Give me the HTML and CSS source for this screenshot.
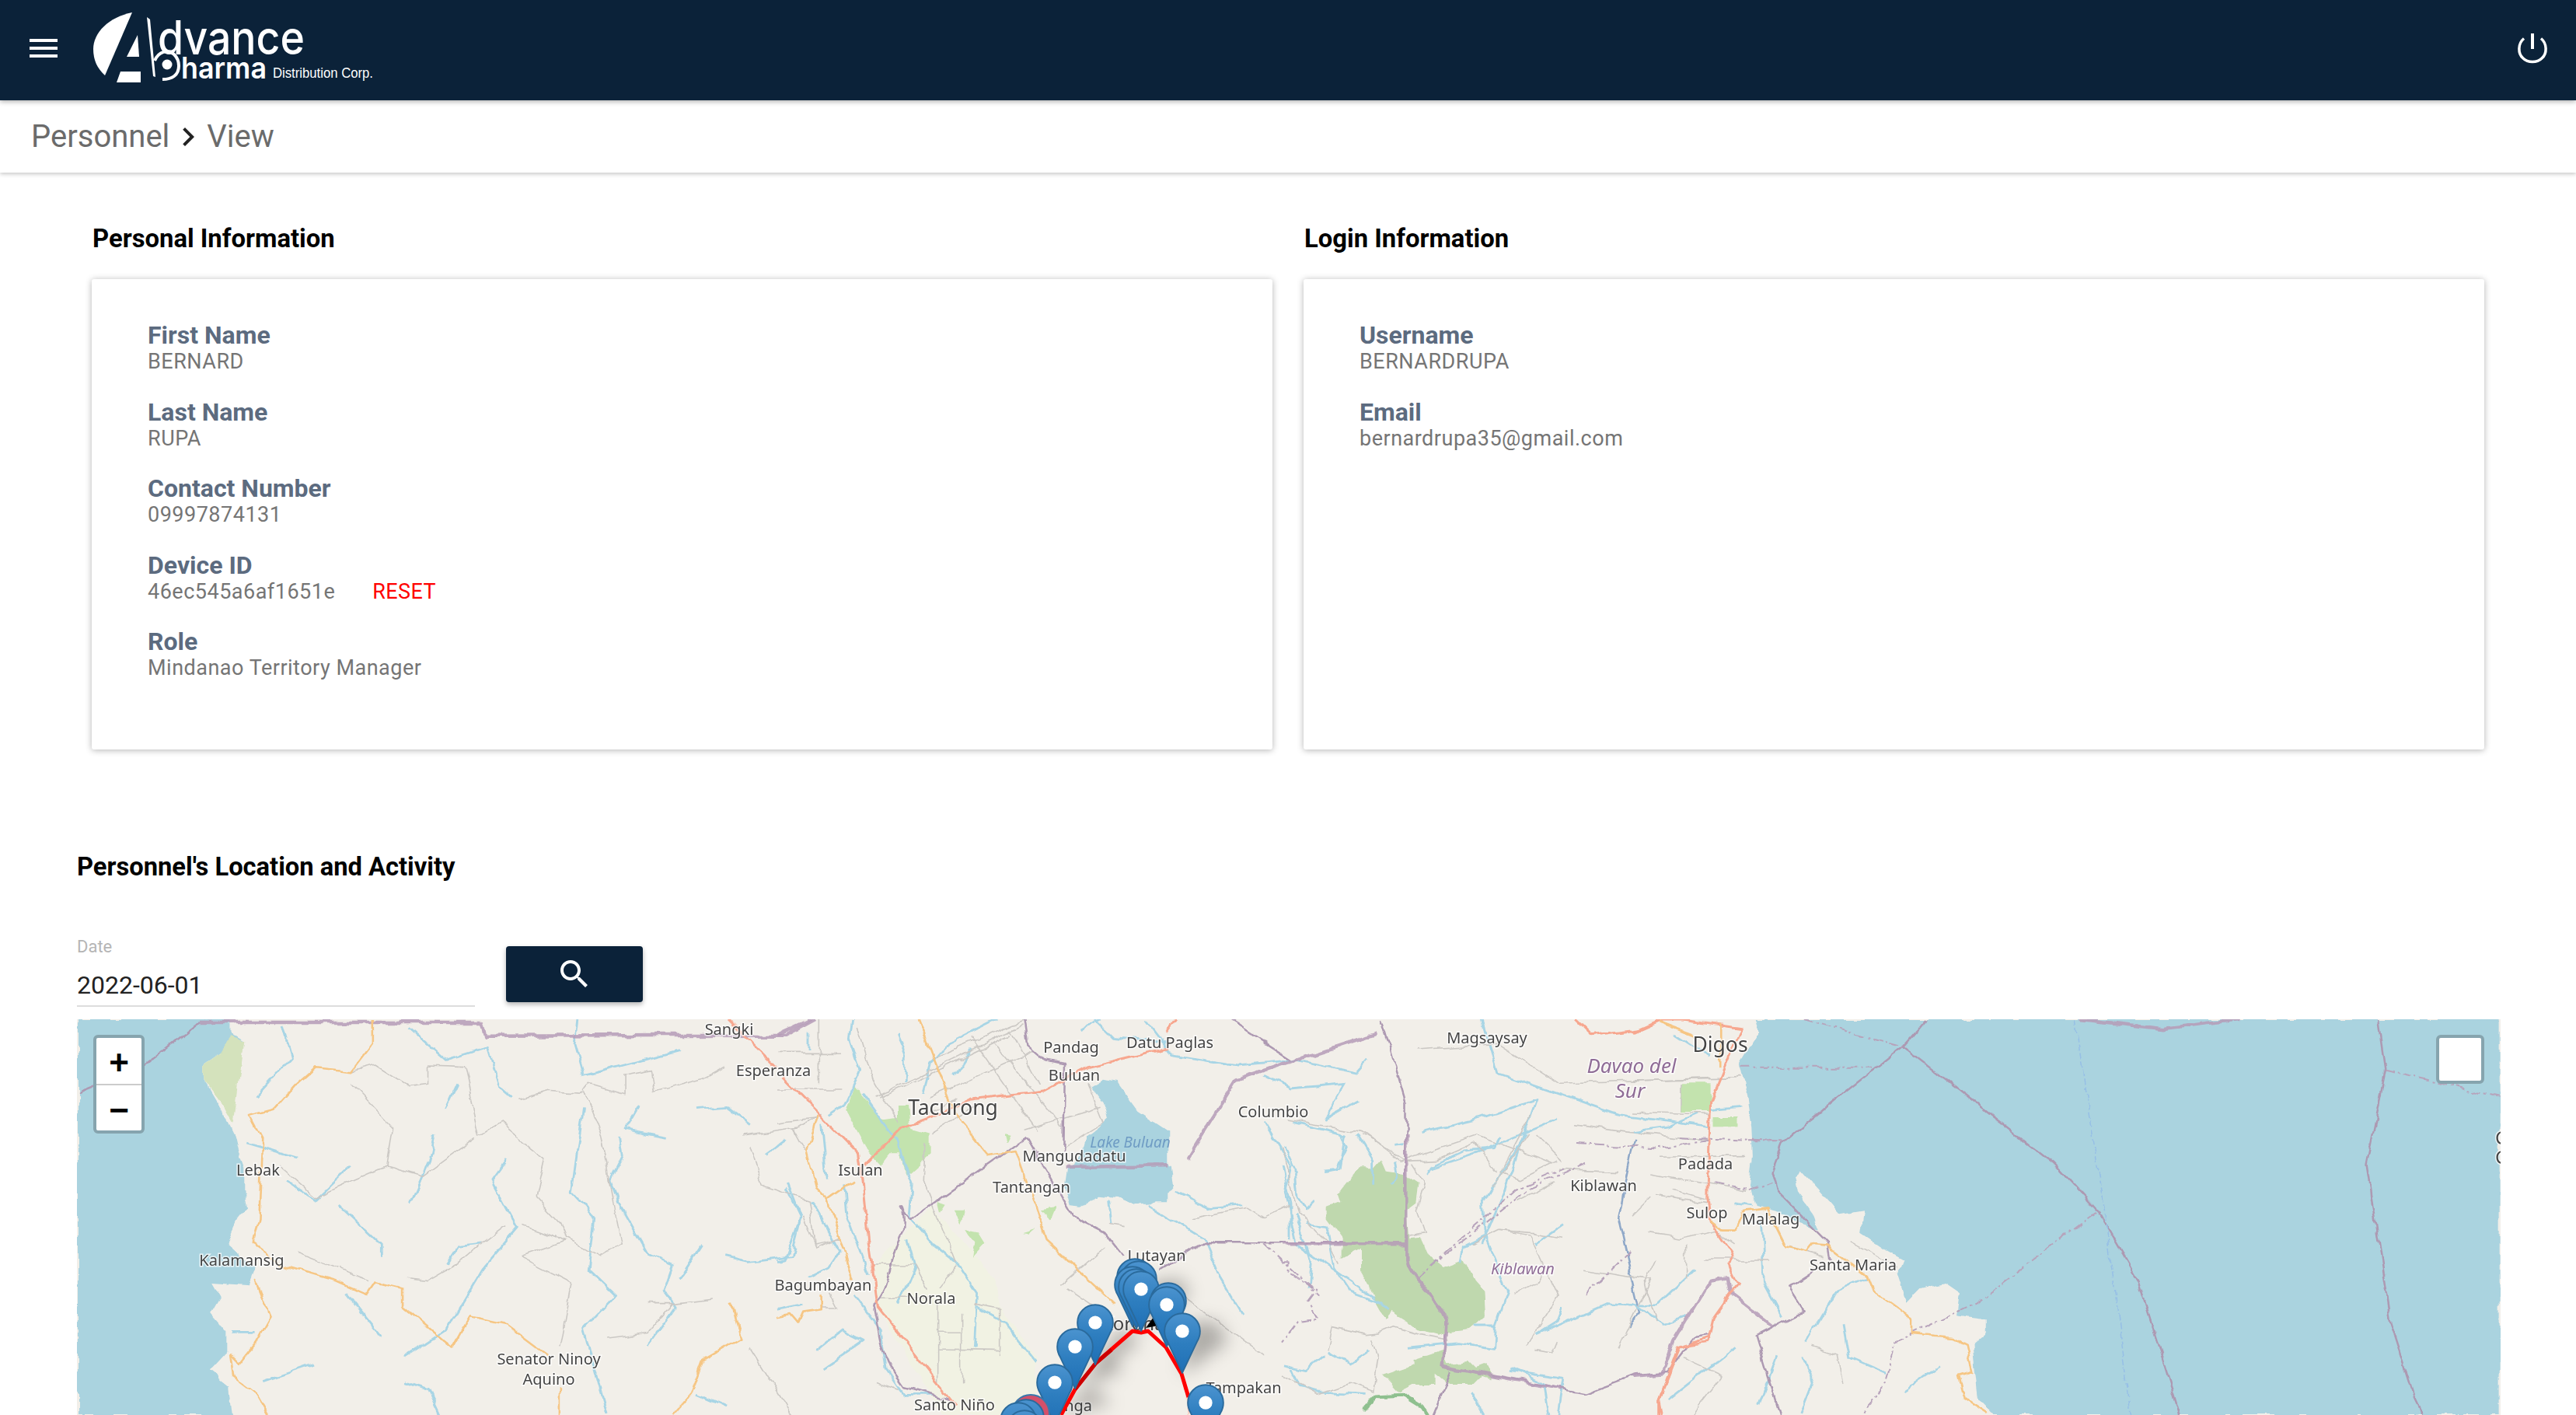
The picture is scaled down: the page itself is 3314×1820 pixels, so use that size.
FILE: index.html
```html
<!DOCTYPE html>
<html lang="en">
<head>
<meta charset="utf-8">
<title>Personnel View</title>
<link rel="stylesheet" href="styles.css">
</head>
<body>
<header class="topbar">
  <button class="icon-btn menu-btn" aria-label="Menu"><span></span><span></span><span></span></button>
  <svg class="logo" width="500" height="129" viewBox="0 0 500 129">
    <path class="logo-fill" d="M170 16C140 22 120 42 120 63C120 77 125 88 135 97Z"/>
    <path class="logo-fill" d="M177 45L179 73L163 73Z"/>
    <path class="logo-fill" d="M155 92L181 92L181 106L150 106Z"/>
    <path class="logo-fill" d="M189 22L193 25L200 99L197 98Z"/>
    <path class="logo-line" d="M199 78C204 66 216 63 224 70C232 78 232 92 224 98C220 101 214 102 209 102"/>
    <circle class="logo-fill" cx="215" cy="83" r="6.500"/>
    <text class="logo-big" x="203" y="70" textLength="189" lengthAdjust="spacingAndGlyphs">dvance</text>
    <text class="logo-mid" x="233" y="101" textLength="110" lengthAdjust="spacingAndGlyphs">harma</text>
    <text class="logo-small" x="351" y="100" textLength="129" lengthAdjust="spacingAndGlyphs">Distribution Corp.</text>
  </svg>
  <button class="icon-btn power-btn" aria-label="Log out">
    <svg width="40" height="40" viewBox="0 0 40 40"><path class="power-line" d="M9 7.500C1 14 1 27 8 33C14 39 26 39 32 33C39 27 39 14 31 7.500"/><rect class="power-bar" x="18" y="1" width="4" height="20"/></svg>
  </button>
</header>

<nav class="crumbs">
  <span>Personnel</span>
  <svg class="chevron" width="48" height="48" viewBox="0 0 24 24"><path d="M10 6L8.590 7.410 13.170 12l-4.580 4.590L10 18l6-6z"/></svg>
  <span>View</span>
</nav>

<main>
  <section class="info-grid">
    <div>
      <h2 class="info-title">Personal Information</h2>
      <div class="card">
        <div class="field"><div class="field-label">First Name</div><div class="field-value">BERNARD</div></div>
        <div class="field"><div class="field-label">Last Name</div><div class="field-value">RUPA</div></div>
        <div class="field"><div class="field-label">Contact Number</div><div class="field-value">09997874131</div></div>
        <div class="field"><div class="field-label">Device ID</div><div class="field-value device">46ec545a6af1651e<span class="reset">RESET</span></div></div>
        <div class="field"><div class="field-label">Role</div><div class="field-value">Mindanao Territory Manager</div></div>
      </div>
    </div>
    <div>
      <h2 class="info-title">Login Information</h2>
      <div class="card">
        <div class="field"><div class="field-label">Username</div><div class="field-value">BERNARDRUPA</div></div>
        <div class="field"><div class="field-label">Email</div><div class="field-value">bernardrupa35@gmail.com</div></div>
      </div>
    </div>
  </section>

  <section class="activity">
    <h2 class="activity-title">Personnel's Location and Activity</h2>
    <div class="filter">
      <div class="date-field">
        <div class="date-label">Date</div>
        <div class="date-value">2022-06-01</div>
      </div>
      <button class="search-btn" aria-label="Search">
        <svg width="48" height="48" viewBox="0 0 24 24"><path d="M15.500 14h-.79l-.28-.27C15.410 12.590 16 11.110 16 9.500 16 5.910 13.090 3 9.500 3S3 5.910 3 9.500 5.910 16 9.500 16c1.610 0 3.090-.59 4.230-1.570l.27.28v.79l5 4.990L20.490 19l-4.990-5zm-6 0C7.010 14 5 11.990 5 9.500S7.010 5 9.500 5 14 7.010 14 9.500 11.990 14 9.500 14z"/></svg>
      </button>
    </div>

    <div class="map">
      <svg class="map-svg" width="3118" height="509" viewBox="99 1311 3118 509">
        <defs>
          <linearGradient id="pinfill" x1="0" y1="0" x2="0" y2="1">
            <stop offset="0" stop-color="#4b93cf"/>
            <stop offset="0.500" stop-color="#2e7ebf"/>
            <stop offset="1" stop-color="#1f6fb5"/>
          </linearGradient>
          <filter id="wiggle" filterUnits="userSpaceOnUse" x="60" y="1280" width="3200" height="580">
            <feTurbulence type="fractalNoise" baseFrequency="0.035" numOctaves="3" seed="7" result="noise"/>
            <feDisplacementMap in="SourceGraphic" in2="noise" scale="11" xChannelSelector="R" yChannelSelector="G"/>
            <feGaussianBlur stdDeviation="0.7"/>
          </filter>
          <symbol id="pin" width="48" height="79" viewBox="0 0 25 41">
            <path class="pin-body" d="M12.500 .6C5.900 .6 .6 5.900 .6 12.500C.6 15 1.400 17.500 2.600 19.500L12.500 40.400L22.400 19.500C23.600 17.500 24.400 15 24.400 12.500C24.400 5.900 19.100 .6 12.500 .6Z"/>
            <circle class="pin-dot" cx="12.500" cy="12.500" r="4.500"/>
          </symbol>
        </defs>

        <rect class="land" x="99" y="1311" width="3118" height="509"/>

        <g class="soft">
          <g transform="translate(1100,1300) scale(.7015,.3333)">
            <path class="water" d="M500 500L580 600L585 690L545 745L510 750L480 720Z"/>
          </g>
          <g transform="translate(100,1300) scale(.7653,.3333)">
            <path class="water" d="M0 33L258 33L258 90L280 120L240 165L212 210L212 270L225 320L250 420L265 490L270 540L280 600L280 700L285 760L270 800L250 900L300 1000L290 1060L225 1050L240 1110L225 1170L250 1240L250 1320L222 1390L255 1450L260 1560L0 1560Z"/>
            <path class="green-pale" d="M258 100L280 120L262 440L240 350L212 270L212 210L240 165Z"/>
          </g>
          <g transform="translate(2100,1300) scale(.7742,.3333)">
            <path class="water" d="M205 33L212 80L178 210L190 330L198 450L200 560L195 680L205 750L240 770L270 810L310 840L300 780L275 700L270 640L280 620L310 700L345 790L385 775L380 860L415 915L450 960L440 1020L455 1130L480 1070L520 1050L545 1090L540 1180L590 1195L590 1240L565 1290L570 1400L575 1500L600 1560L1441 1560L1441 33Z"/>
            <path class="green-light" d="M80 280L130 280L130 390L80 390Z"/>
            <path class="green-light" d="M135 405L175 405L175 445L135 445Z"/>
          </g>

          <g transform="translate(100,1300) scale(.7653,.3333)">
            <path class="river" d="M345 60L360 180L300 330M560 70L620 190L690 140L710 290L730 330M840 33L835 130L850 250L1010 155M640 280L620 380M600 480L590 580L560 740M720 570L695 650L740 840L680 1000L620 1230L550 1335M850 370L830 700L870 800L860 1000L905 1100L850 1230L890 1560M945 360L920 460L990 490M910 480L915 560L895 650L910 740L960 940L1000 980L985 1080L1005 1140L960 1290M350 660L400 730L460 600M440 750L510 900L510 950M1050 900L1010 1040M1090 950L1130 970L1200 950L1215 800L1190 680M280 510L370 570M450 1090L510 1260M1040 380L1090 370L1130 440M1160 550L1190 500M260 1240L300 1240M310 1430L400 1360M550 1430L590 1460L610 1560M1040 1480L1090 1530M620 980L640 910L680 900"/>
            <path class="grey" d="M460 235L500 210L555 290L590 280L590 210L650 215L675 480L710 430L785 570L770 720L810 820L820 880L880 950L915 900L880 480L850 310L860 280L920 320L920 250L965 230L970 310L1050 260L1090 210M740 340L790 310L850 320M460 280L530 450L520 600L400 720L340 600M670 490L580 640L520 600M720 830L680 900L650 960L590 1040L550 1030M370 930L490 1040M750 830L820 890L745 950L830 1050L810 1300M1120 480L1210 450L1250 400M1130 520L1150 670L1230 730L1240 900L1280 880M960 1130L1000 1130L1070 1110M890 1260L960 1240L1000 1130M1130 1300L1200 1560"/>
            <path class="border-thick" d="M205 45L680 45L685 98L1190 95L1240 33"/>
            <path class="border" d="M0 315L110 215L205 45"/>
            <path class="primary" d="M1095 33L1176 223"/>
            <path class="secondary" d="M495 33L495 130L460 235L400 220L365 290L330 380L290 405L310 490L305 800L295 900L350 990L440 1050L485 1095L500 1045L545 1070L545 1140L600 1245L630 1305L660 1180L720 1210L790 1330M300 1040L325 1180L300 1280L270 1365L255 1330L260 1410L300 1480L320 1560M810 1450L810 1560M1100 1130L1115 1265L1050 1350L1030 1480L1000 1560"/>
          </g>

          <g transform="translate(1100,1300) scale(.7015,.3333)">
            <path class="river" d="M530 33L580 170L700 210L810 190L920 240L940 190M750 250L800 300L900 280L860 420L920 350M800 430L900 480L890 610L860 620M750 430L800 600L790 700L810 900L880 1000L950 1100L975 1150M1040 470L1140 420L1250 340L1190 700L1150 900M1050 610L1150 540L1290 420M590 700L650 760L710 750M540 750L640 880L670 1030L710 1170M1250 1250L1380 1130L1470 1140L1540 1000M1150 33L1180 240L1290 320L1400 400L1568 450M1200 1390L1300 1420L1290 1560"/>
            <path class="river-dark" d="M1430 500L1400 800L1440 1170L1420 1220"/>
            <path class="grey" d="M1030 150L1180 130L1290 280L1568 260M790 420L930 470L1000 580L1140 480L1280 590M1180 850L1240 870L1290 1100L1230 1300M1240 400L1170 680M600 1100L750 1330M620 800L720 760L750 800L800 750M1320 440L1420 470L1568 500M1500 690L1568 730M1290 610L1400 620M1340 1000L1460 1040L1400 1300"/>
            <path class="border" d="M965 33L1010 350L1010 1040L1085 1150L1080 1370L1340 1475L1430 1405L1490 1395L1540 1260L1568 1250M685 33L800 190M640 895L1010 895M560 1000L640 895"/>
            <path class="border-thick" d="M960 85L700 265L610 570"/>
            <path class="border-dash" d="M1030 1030L1240 680L1340 590M1320 510L1470 530L1568 500M750 900L850 1100M1340 1100L1420 930"/>
            <path class="primary" d="M1320 33L1350 95L1440 70L1480 33L1530 33M1568 1260L1510 1300L1475 1500L1475 1560M590 33L570 90"/>
            <path class="primary-faint" d="M605 1420L610 1560"/>
            <path class="secondary" d="M1475 40L1540 90"/>
          </g>

          <g transform="translate(2100,1300) scale(.7742,.3333)">
            <path class="river" d="M70 90L130 180M130 380L180 370M0 470L60 450L110 400M170 740L200 750M215 810L220 1050L250 1180M390 1030L340 1080L290 1280M280 1340L300 1440L280 1560M350 1210L360 1340L420 1400M510 1375L450 1470M0 1130L50 1210L90 1180M170 1300L60 1500M240 1330L210 1520"/>
            <path class="grey" d="M0 270L180 260M0 390L130 400M45 565L190 560M30 630L190 700M40 710L125 740M0 790L30 720M30 860L80 880L140 850L170 900M40 960L20 1060L40 1200M120 960L230 960M90 1040L90 900M85 1340L150 1410L100 1560M300 1300L340 1330L350 1440M360 890L440 990M80 280L80 390M260 910L320 950"/>
            <path class="border" d="M490 33L450 140L340 340L250 510L232 620L240 690L325 890L330 960M450 140L700 590L775 780L840 1040L910 1560M1240 33L1252 225L1220 600L1260 1200L1310 1560M300 1010L260 1070L285 1160L205 1255L245 1560"/>
            <path class="border-thick" d="M745 33L880 70L1010 33M0 1410L50 1400L70 1270L130 1040L160 1030L165 1100L232 1220"/>
            <path class="border-dash" d="M285 33L450 140M1252 230L1440 335M770 780L570 1130L440 1270L415 1470L380 1560M180 218L400 218M195 505L250 505M80 490L250 505M135 670L195 695L232 665"/>
            <path class="sea-dash" d="M735 33L770 550L830 1560"/>
            <path class="primary" d="M0 80L45 33M85 33L180 65L130 350L125 720L130 810L165 930L160 980L175 1050L135 1180L125 1280L80 1295L45 1500L50 1560"/>
            <path class="secondary" d="M45 40L105 95M145 50L145 220M130 810L150 845L170 845L185 770L225 760L240 840L255 910L290 930L300 900L325 905L390 1020L400 1080L465 1190L465 1245L530 1260L555 1290L565 1395L540 1410L550 1500L590 1560"/>
          </g>

          <g transform="translate(1000,1311) scale(.3333)">
            <path class="farm" d="M370 950L600 720L840 1000L860 1110L1000 1300L1000 1527L640 1527L390 1130Z"/>
            <path class="green-light" d="M295 260L345 320L400 390L465 380L465 330L510 330L520 420L590 440L590 520L500 600L470 520L430 520L400 560L345 500L265 350Z"/>
            <path class="green-light" d="M730 810L780 820L805 860L750 920L760 860Z"/>
            <path class="green-light" d="M680 740L720 740L710 790Z"/>
            <path class="green-light" d="M1010 730L1080 720L1060 770Z"/>
            <path class="green-light" d="M620 700L650 710L630 740Z"/>
            <path class="green-light" d="M950 825L1000 810L975 830Z"/>
            <path class="green-light" d="M880 435L905 440L890 470Z"/>
            <path class="water" d="M1260 230L1210 260L1270 340L1280 380L1240 420L1200 450L1190 490L1150 560L1120 570L1110 640L1130 720L1170 725L1240 680L1340 690L1370 720L1420 700L1510 700L1510 430L1390 350L1310 240Z"/>
            <path class="river" d="M290 0L280 80L320 200L260 330L200 370M460 60L490 130L490 240M120 50L120 120M680 220L750 110M560 280L590 170L650 100L850 0M170 410L190 620M330 290L460 470L520 640L510 760L600 870L690 940L770 1060L760 1270M130 700L240 900L200 960L120 1000M260 640L270 760L350 980M40 630L90 760L30 930L0 935M500 850L530 960L470 1100M0 1120L100 1100M150 1280L250 1200L330 1240L170 1350M770 1110L880 1170L1000 1320M1290 790L1280 700M300 1070L400 1200L420 1350L490 1450L600 1450M1160 50L1250 0M1230 0L1300 70L1500 90"/>
            <path class="grey" d="M380 300L950 20M600 150L960 0M400 300L900 60M590 300L1000 120M600 440L780 330M590 360L700 300M750 70L1000 430M830 90L1100 420M900 40L1010 250M310 30L370 230L470 400M570 480L565 620L690 940M0 400L150 380M60 420L110 510M100 760L150 880L240 840M360 945L530 945L580 1040M390 1075L600 1075M620 1040L690 950M620 1210L710 1210M620 1275L860 1280M710 1130L710 1400M760 1100L860 1120L860 1300M620 1100L620 1400M390 1400L470 1430M1090 1030L1270 880M1120 1040L1280 1150M1340 800L1280 790M950 430L1250 340M1200 250L1260 400L1100 500M200 1050L230 1110L170 1110M160 0L160 250M0 270L250 270M0 130L240 130"/>
            <path class="border-thick" d="M1115 570L1510 565M0 60L130 0"/>
            <path class="border" d="M955 0L970 100L1040 160L1110 175L1105 510M965 455L515 770C440 700 500 690 490 810C430 900 440 1050 370 1100L400 1250L440 1350L490 1420L600 1450L670 1470M965 455L1140 760L1260 820L1340 920"/>
            <path class="primary" d="M20 225L310 520L325 600L350 850L385 1110L690 1490M340 560L480 420L600 375L740 310L1030 275L1200 185L1510 110"/>
            <path class="secondary" d="M545 0L700 390L815 525L920 510L1040 855L1310 1100M155 370L115 510L150 650L195 695L300 620M195 695L290 1010M170 1060L170 1120L100 1130L80 1175L50 1140L0 1150"/>
          </g>

          <g transform="translate(1650,1460) scale(.3333)">
            <path class="green" d="M380 95L400 140L470 150L530 190L520 260L480 290L490 400L530 395L560 460L620 510L700 480L740 560L775 600L780 700L720 750L640 760L600 770L520 750L470 710L420 680L400 720L370 670L340 590L300 520L300 440L230 480L230 400L170 320L170 280L220 260L210 230L290 130L350 130Z"/>
            <path class="green" d="M620 830L640 880L720 870L750 900L790 885L810 940L770 930L740 960L640 960L590 920L590 960L500 960L440 990L385 930L500 890L500 870Z"/>
            <path class="river" d="M10 45L50 130L60 230L90 285L120 255M0 120L30 260L30 400M290 0L350 100L350 200M230 0L250 40L210 130L160 135M430 40L470 35M430 100L440 160L420 190M50 300L110 480L100 590M90 340L170 350L200 510L260 600L370 640L410 675M560 150L570 120L700 60L820 50L850 0M940 0L810 200L775 260L785 400L870 600L820 740L815 820L680 800L480 820M690 490L700 430L780 390M820 735L740 735M1080 670L1060 720L980 770M980 420L1080 350M880 900L1010 960L1030 1080M730 990L780 1080M170 840L260 885L340 830M0 885L90 905L160 850M30 900L60 970L130 990L320 1000"/>
            <path class="grey" d="M0 50L60 300L180 420L220 500M310 0L480 100L590 95L740 30L830 135M810 200L950 0M840 140L920 170L1060 100M980 0L1080 100M910 250L1050 180M500 110L550 190L520 290L550 380L490 390M730 420L830 370L970 380L1080 400M890 620L980 570L1000 530M970 830L1040 840L1060 790M170 830L190 740L330 770L370 765L430 740L530 770L640 790M350 790L370 850L350 990L260 955L130 1000L0 930"/>
            <path class="forest-edge" d="M310 1060L360 1005L460 1000L540 1050L560 1080"/>
            <path class="border-dash" d="M0 490L20 490L20 530L130 600L100 640L135 710L60 720L0 800M520 550L780 320L900 210L1080 130"/>
            <path class="border-thick" d="M478 0L478 480C480 550 600 620 635 720L630 790L620 890L1080 980M0 418L478 418"/>
            <path class="border" d="M650 910L580 1080"/>
          </g>
        </g>

        <g class="labels">
          <text x="938" y="1331">Sangki</text>
          <text x="995" y="1384">Esperanza</text>
          <text x="1378" y="1354">Pandag</text>
          <text x="1505" y="1348">Datu Paglas</text>
          <text x="1382" y="1390">Buluan</text>
          <text class="town" x="1226" y="1434">Tacurong</text>
          <text x="1913" y="1342">Magsaysay</text>
          <text class="town" x="2213" y="1353">Digos</text>
          <text class="region big" x="2099" y="1380">Davao del</text>
          <text class="region big" x="2097" y="1412">Sur</text>
          <text x="1638" y="1437">Columbio</text>
          <text x="332" y="1512">Lebak</text>
          <text x="1107" y="1512">Isulan</text>
          <text x="1382" y="1494">Mangudadatu</text>
          <text class="lake" x="1454" y="1476">Lake Buluan</text>
          <text x="1327" y="1534">Tantangan</text>
          <text x="2063" y="1532">Kiblawan</text>
          <text x="2194" y="1504">Padada</text>
          <text x="2196" y="1567">Sulop</text>
          <text x="2278" y="1575">Malalag</text>
          <text x="311" y="1628">Kalamansig</text>
          <text x="2384" y="1634">Santa Maria</text>
          <text class="region" x="1959" y="1639">Kiblawan</text>
          <text x="1488" y="1622">Lutayan</text>
          <text x="1059" y="1660">Bagumbayan</text>
          <text x="1198" y="1677">Norala</text>
          <text x="706" y="1755">Senator Ninoy</text>
          <text x="706" y="1781">Aquino</text>
          <text x="1228" y="1814">Santo Niño</text>
          <text x="1600" y="1792">Tampakan</text>
          <text class="town-mid" x="1475" y="1711">Koronadal</text>
          <text x="1375" y="1815">Banga</text>
          <text class="edge" x="3210" y="1472">C</text>
          <text class="edge" x="3210" y="1497">C</text>
        </g>

        <g class="pin-shadows">
          <path d="M1468 1712L1530 1665L1520 1645L1480 1650Z"/>
          <path d="M1521 1768L1580 1725L1565 1700L1530 1700Z"/>
          <path d="M1409 1756L1465 1730L1445 1705Z"/>
          <path d="M1383 1788L1445 1762L1425 1738Z"/>
          <path d="M1357 1820L1430 1805L1405 1785Z"/>
        </g>

        <path class="track" d="M1365 1820L1383 1787L1410 1753L1457 1712L1468 1714L1477 1712L1500 1733L1520 1767L1529 1797"/>
        <path class="track-dark" d="M1383 1787L1410 1753L1430 1736"/>
        <path class="blot" d="M1474 1708L1484 1694L1490 1705Z"/>

        <g>
          <use href="#pin" x="1436" y="1618"/>
          <use href="#pin" x="1441" y="1621"/>
          <use href="#pin" x="1433" y="1628"/>
          <use href="#pin" x="1438" y="1631"/>
          <use href="#pin" x="1444" y="1634"/>
          <use href="#pin" x="1479" y="1649"/>
          <use href="#pin" x="1477" y="1654"/>
          <use href="#pin" x="1497" y="1688"/>
          <use href="#pin" x="1385" y="1677"/>
          <use href="#pin" x="1359" y="1708"/>
          <use href="#pin" x="1333" y="1754"/>
          <use href="#pin" x="1527" y="1780"/>
          <circle class="hot" cx="1326" cy="1818" r="24"/>
          <use href="#pin" x="1296" y="1799"/>
          <use href="#pin" x="1286" y="1803"/>
          <use href="#pin" x="1294" y="1813"/>
        </g>
      </svg>

      <div class="zoom-ctl">
        <button class="zoom-btn">+</button>
        <button class="zoom-btn">−</button>
      </div>
      <div class="layer-ctl"></div>
    </div>
  </section>
</main>
</body>
</html>
```

FILE: styles.css
```css
* {
  box-sizing: border-box;
}

html,
body {
  margin: 0;
  height: 1820px;
  overflow: hidden;
  background: #fff;
  font-family: Roboto, "Liberation Sans", sans-serif;
}

.topbar {
  position: relative;
  z-index: 2;
  height: 129px;
  background: #0b2239;
  display: flex;
  align-items: center;
  justify-content: space-between;
  box-shadow: 0 2px 6px rgba(0, 0, 0, .3);
}

.icon-btn {
  background: none;
  border: 0;
  padding: 0;
}

.menu-btn {
  margin-left: 38px;
  margin-top: -6px;
  width: 36px;
  display: flex;
  flex-direction: column;
  gap: 6px;
}

.menu-btn span {
  display: block;
  height: 4px;
  background: #fff;
}

.logo {
  position: absolute;
  left: 0;
  top: 0;
}

.logo-fill {
  fill: #fff;
}

.logo-line {
  fill: none;
  stroke: #fff;
  stroke-width: 4;
}

.logo-big {
  fill: #fff;
  font-family: Inter, sans-serif;
  font-size: 60px;
  font-weight: 500;
}

.logo-mid {
  fill: #fff;
  font-family: Inter, sans-serif;
  font-size: 38px;
  font-weight: 600;
}

.logo-small {
  fill: #fff;
  font-family: "Liberation Sans", sans-serif;
  font-size: 18px;
}

.power-btn {
  margin-right: 36px;
  margin-top: -5px;
  height: 40px;
}

.power-line {
  fill: none;
  stroke: #fff;
  stroke-width: 3.500;
}

.power-bar {
  fill: #fff;
}

.crumbs {
  height: 93px;
  padding-left: 40px;
  display: flex;
  align-items: center;
  font-size: 40px;
  color: #6b6b6b;
  background: #fff;
  box-shadow: 0 2px 5px rgba(0, 0, 0, .22);
  position: relative;
  z-index: 1;
}

.chevron {
  fill: #222;
}

.info-grid {
  padding: 65px 118px 0 118px;
  display: grid;
  grid-template-columns: 1519px 1519px;
  column-gap: 40px;
}

.info-title {
  margin: 0 0 32px 1px;
  font-size: 32.800px;
  line-height: 40px;
  font-weight: 700;
  color: #000;
}

.card {
  height: 605px;
  padding: 53px 72px;
  border-radius: 3px;
  background: #fff;
  box-shadow: 0 1px 8px rgba(0, 0, 0, .3);
  display: flex;
  flex-direction: column;
  gap: 31.500px;
}

.field-label {
  font-size: 32px;
  line-height: 38px;
  font-weight: 700;
  color: #5c6b7f;
}

.field-value {
  margin-top: 1px;
  font-size: 27px;
  line-height: 28px;
  letter-spacing: .5px;
  color: #757575;
}

.reset {
  margin-left: 48px;
  color: #f00;
  letter-spacing: .4px;
}

.activity {
  padding: 131px 97px 0 99px;
}

.activity-title {
  margin: 0 0 70px;
  font-size: 32.700px;
  line-height: 40px;
  font-weight: 700;
  color: #000;
}

.filter {
  display: flex;
  align-items: flex-start;
  gap: 40px;
  margin-bottom: 16px;
}

.date-field {
  width: 512px;
  height: 90px;
  border-bottom: 2px solid #ddd;
}

.date-label {
  font-size: 22px;
  line-height: 26px;
  color: #b5b5b5;
}

.date-value {
  margin-top: 16px;
  font-size: 32px;
  line-height: 40px;
  color: #222;
}

.search-btn {
  margin-top: 12px;
  width: 176px;
  height: 72px;
  border: 0;
  border-radius: 4px;
  background: #0b2239;
  box-shadow: 0 3px 6px rgba(0, 0, 0, .3);
  display: flex;
  align-items: center;
  justify-content: center;
}

.search-btn svg {
  fill: #fff;
}

.map {
  position: relative;
  width: 3118px;
  height: 509px;
  overflow: hidden;
}

.map-svg {
  display: block;
}

.land {
  fill: #f2efe9;
}

.soft {
  filter: url(#wiggle);
}

.water {
  fill: #aad3df;
}

.green {
  fill: #bfd8ae;
}

.green-light {
  fill: #c3e3ae;
}

.green-pale {
  fill: #d4e2bc;
}

.farm {
  fill: #f1f2e3;
}

.river,
.river-dark,
.grey,
.border,
.border-thick,
.border-dash,
.sea-dash,
.primary,
.primary-faint,
.secondary,
.forest-edge {
  fill: none;
  vector-effect: non-scaling-stroke;
  stroke-linejoin: round;
}

.river {
  stroke: #a8d5e5;
  stroke-width: 2.800;
}

.river-dark {
  stroke: #8fa8c8;
  stroke-width: 2.500;
}

.grey {
  stroke: #cbc8c4;
  stroke-width: 1.600;
}

.border {
  stroke: #ad99b2;
  stroke-width: 2.500;
}

.border-thick {
  stroke: #b69cb8;
  stroke-width: 4.500;
  opacity: .85;
}

.border-dash {
  stroke: #b7a3bb;
  stroke-width: 2;
  stroke-dasharray: 12 4 3 4;
}

.sea-dash {
  stroke: #96bfe6;
  stroke-width: 1.500;
  stroke-dasharray: 8 3;
}

.primary {
  stroke: #f7a78f;
  stroke-width: 3;
}

.primary-faint {
  stroke: #f9cfc1;
  stroke-width: 3;
}

.secondary {
  stroke: #f6c684;
  stroke-width: 2.600;
}

.forest-edge {
  stroke: #8fc08f;
  stroke-width: 5;
}

.labels text {
  font-family: "Noto Sans", sans-serif;
  font-size: 20px;
  fill: #444;
  text-anchor: middle;
  stroke: rgba(255, 255, 255, .75);
  stroke-width: 3px;
  paint-order: stroke;
}

.labels .town {
  font-size: 26.500px;
}

.labels .town-mid {
  font-size: 24px;
}

.labels .region {
  font-style: italic;
  fill: #8f6c96;
}

.labels .big {
  font-size: 26px;
}

.labels .lake {
  font-style: italic;
  fill: #6f9cc4;
  font-size: 19px;
  stroke: none;
}

.labels .edge {
  text-anchor: start;
  font-size: 24px;
}

.pin-shadows {
  fill: rgba(0, 0, 0, .28);
  filter: blur(11px);
}

.track {
  fill: none;
  stroke: #f00;
  stroke-width: 5;
  stroke-linejoin: round;
}

.track-dark {
  fill: none;
  stroke: #c00;
  stroke-width: 5;
}

.blot {
  fill: #000;
}

.hot {
  fill: #d3506a;
  stroke: #3a78ab;
  stroke-width: 2;
}

.pin-body {
  fill: url(#pinfill);
  stroke: #2a6a9c;
  stroke-width: 1;
}

.pin-dot {
  fill: #fff;
}

.zoom-ctl {
  position: absolute;
  left: 21px;
  top: 20px;
  width: 66px;
  height: 127px;
  border: 4px solid #86a4ae;
  border-radius: 6px;
  background: #86a4ae;
  display: flex;
  flex-direction: column;
  gap: 2px;
  overflow: hidden;
}

.zoom-btn {
  flex: 1;
  border: 0;
  padding: 6px 0 0;
  background: #fff;
  color: #000;
  font-family: "Liberation Sans", sans-serif;
  font-size: 44px;
  font-weight: 700;
  line-height: 1;
}

.zoom-btn + .zoom-btn {
  box-shadow: 0 -2px 0 #ccc;
}

.layer-ctl {
  position: absolute;
  left: 3035px;
  top: 20px;
  width: 62px;
  height: 63px;
  border: 4px solid #86a4ae;
  border-radius: 6px;
  background: #fff;
}
```
